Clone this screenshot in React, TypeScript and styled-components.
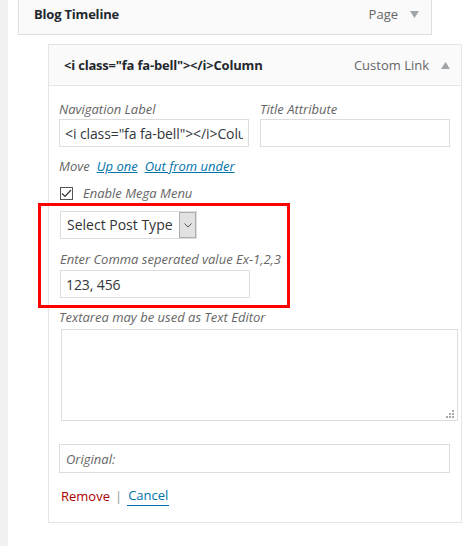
import React from 'react';
import styled, { createGlobalStyle } from 'styled-components';

const GlobalStyle = createGlobalStyle`
  html, body {
    margin: 0;
    padding: 0;
    background: #fff;
  }
  body {
    font-family: "Open Sans", "Liberation Sans", sans-serif;
    font-size: 13px;
    color: #444;
  }
`;

const Page = styled.div`
  display: flex;
  min-height: 546px;
  overflow: hidden;
`;

const Gutter = styled.div`
  width: 8px;
  flex-shrink: 0;
  background: #f1f1f1;
`;

const Main = styled.div`
  flex: 1;
  padding-left: 10px;
`;

const ItemBar = styled.div`
  box-sizing: border-box;
  width: 414px;
  display: flex;
  align-items: flex-start;
  justify-content: space-between;
  background: #fafafa;
  border: 1px solid #dfdfdf;
  border-top: none;
  height: 35px;
  padding: 4px 12px 0 15px;
  line-height: 20px;
`;

const ItemTitle = styled.span`
  font-weight: 700;
  font-size: 13px;
  letter-spacing: -0.2px;
  color: #23282d;
`;

const ItemMeta = styled.span`
  display: flex;
  align-items: center;
  gap: 12px;
  color: #666;
  font-size: 13px;
`;

const Arrow = ({ up }: { up?: boolean }) => (
  <svg width="9" height="7" viewBox="0 0 9 7">
    <polygon points={up ? '0,7 9,7 4.5,0' : '0,0 9,0 4.5,7'} fill="#a0a5aa" />
  </svg>
);

const ItemBox = styled.div`
  box-sizing: border-box;
  width: 414px;
  margin: 9px 0 0 30px;
  border: 1px solid #e5e5e5;
  background: #fff;
`;

const ItemHead = styled.div`
  display: flex;
  align-items: center;
  justify-content: space-between;
  height: 40px;
  padding: 0 11px 0 15px;
  background: #fafafa;
  border-bottom: 1px solid #e5e5e5;
`;

const Settings = styled.div`
  padding: 14px 10px 16px 10px;
`;

const FieldRow = styled.div`
  display: flex;
  gap: 11px;
`;

const Field = styled.div<{ $width?: number }>`
  width: ${(p) => p.$width ?? 190}px;
`;

const Label = styled.label`
  display: block;
  font-style: italic;
  color: #666;
  font-size: 13px;
  line-height: 18px;
  margin-bottom: 1px;
  white-space: nowrap;
`;

const TextInput = styled.input<{ $width?: number }>`
  box-sizing: border-box;
  display: block;
  width: ${(p) => p.$width ?? 190}px;
  height: 28px;
  border: 1px solid #ddd;
  padding: 0 5px;
  font-family: "Open Sans", "Liberation Sans", sans-serif;
  font-size: 14px;
  letter-spacing: -0.1px;
  color: #32373c;
  background: #fff;
  outline: none;
`;

const MoveRow = styled.div`
  margin-top: 10px;
  line-height: 18px;
  font-style: italic;
  color: #666;
  display: flex;
  gap: 7px;
`;

const Link = styled.a<{ $danger?: boolean }>`
  color: ${(p) => (p.$danger ? '#a00' : '#0073aa')};
  text-decoration: ${(p) => (p.$danger ? 'none' : 'underline')};
  cursor: pointer;
`;

const CancelLink = styled.a`
  color: #0073aa;
  text-decoration: none;
  border-bottom: 1px solid #0073aa;
  padding: 0 1px 1px;
  line-height: 18px;
  cursor: pointer;
`;

const CheckRow = styled.label`
  display: flex;
  align-items: center;
  gap: 10px;
  margin-top: 9px;
  padding-left: 1px;
  line-height: 18px;
  font-style: italic;
  color: #666;
`;

const CheckBox = styled.span`
  box-sizing: border-box;
  width: 13px;
  height: 13px;
  border: 1px solid #555;
  display: flex;
  align-items: center;
  justify-content: center;
  background: #fff;
`;

const Highlight = styled.div`
  box-sizing: border-box;
  width: 252px;
  margin: 1px 0 0 -21px;
  border: 3px solid #f00;
  padding: 5px 0 7px 19px;
`;

const SelectBox = styled.div`
  box-sizing: border-box;
  display: flex;
  align-items: stretch;
  width: 137px;
  height: 28px;
  border: 1px solid #ddd;
  background: #fff;
`;

const SelectText = styled.span`
  flex: 1;
  padding-left: 6px;
  font-size: 14px;
  line-height: 26px;
  color: #333;
  white-space: nowrap;
`;

const SelectButton = styled.span`
  box-sizing: border-box;
  width: 17px;
  background: #e1e1e1;
  border: 1px solid #adadad;
  display: flex;
  align-items: center;
  justify-content: center;
`;

const HintLabel = styled(Label)`
  margin-top: 11px;
  margin-bottom: 2px;
`;

const AreaWrap = styled.div`
  position: relative;
  margin: 3px 0 0 2px;
  width: 397px;
`;

const TextArea = styled.textarea`
  box-sizing: border-box;
  display: block;
  width: 397px;
  height: 92px;
  border: 1px solid #ddd;
  resize: none;
  outline: none;
  font-family: "Open Sans", "Liberation Sans", sans-serif;
`;

const Grip = styled.svg`
  position: absolute;
  right: 4px;
  bottom: 3px;
`;

const Original = styled.div`
  box-sizing: border-box;
  width: 391px;
  height: 29px;
  margin-top: 23px;
  border: 1px solid #ddd;
  padding: 0 6px;
  display: flex;
  align-items: center;
  font-style: italic;
  color: #666;
`;

const Actions = styled.div`
  margin-top: 13px;
  padding-left: 2px;
  display: flex;
  align-items: center;
  gap: 5px;
  line-height: 20px;
  font-size: 13px;
`;

const Sep = styled.span`
  color: #999;
`;

const label = '<i class="fa fa-bell"></i>Column';

export default function App() {
  return (
    <Page>
      <GlobalStyle />
      <Gutter />
      <Main>
        <ItemBar>
          <ItemTitle>Blog Timeline</ItemTitle>
          <ItemMeta>
            Page <Arrow />
          </ItemMeta>
        </ItemBar>

        <ItemBox>
          <ItemHead>
            <ItemTitle>{label}</ItemTitle>
            <ItemMeta>
              Custom Link <Arrow up />
            </ItemMeta>
          </ItemHead>

          <Settings>
            <FieldRow>
              <Field>
                <Label>Navigation Label</Label>
                <TextInput defaultValue={label} />
              </Field>
              <Field>
                <Label>Title Attribute</Label>
                <TextInput defaultValue="" />
              </Field>
            </FieldRow>

            <MoveRow>
              <span>Move</span>
              <Link>Up one</Link>
              <Link>Out from under</Link>
            </MoveRow>

            <CheckRow>
              <CheckBox>
                <svg width="11" height="9" viewBox="0 0 11 9">
                  <polyline points="1,4.5 4,7.5 10,1" fill="none" stroke="#333" strokeWidth="1.2" />
                </svg>
              </CheckBox>
              Enable Mega Menu
            </CheckRow>

            <Highlight>
              <SelectBox>
                <SelectText>Select Post Type</SelectText>
                <SelectButton>
                  <svg width="8" height="5" viewBox="0 0 8 5">
                    <polyline points="0.5,0.5 4,4 7.5,0.5" fill="none" stroke="#555" strokeWidth="1" />
                  </svg>
                </SelectButton>
              </SelectBox>
              <HintLabel>Enter Comma seperated value Ex-1,2,3</HintLabel>
              <TextInput defaultValue="123, 456" />
            </Highlight>

            <Label>Textarea may be used as Text Editor</Label>
            <AreaWrap>
              <TextArea />
              <Grip width="8" height="8" viewBox="0 0 8 8">
                <rect x="6" y="0" width="2" height="2" fill="#aaa" />
                <rect x="3" y="3" width="2" height="2" fill="#aaa" />
                <rect x="6" y="3" width="2" height="2" fill="#aaa" />
                <rect x="0" y="6" width="2" height="2" fill="#aaa" />
                <rect x="3" y="6" width="2" height="2" fill="#aaa" />
                <rect x="6" y="6" width="2" height="2" fill="#aaa" />
              </Grip>
            </AreaWrap>

            <Original>Original:</Original>

            <Actions>
              <Link $danger>Remove</Link>
              <Sep>|</Sep>
              <CancelLink>Cancel</CancelLink>
            </Actions>
          </Settings>
        </ItemBox>
      </Main>
    </Page>
  );
}
